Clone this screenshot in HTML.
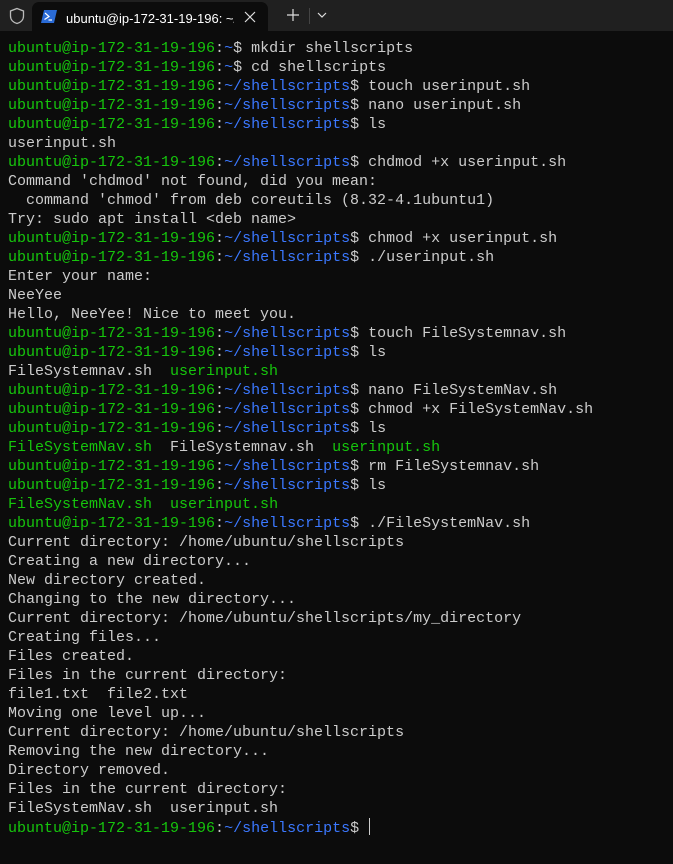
<!DOCTYPE html>
<html><head><meta charset="utf-8"><style>
html,body{margin:0;padding:0;width:673px;height:864px;background:#0c0c0c;overflow:hidden}
.bar{position:absolute;left:0;top:0;width:673px;height:31px;background:#202020}
.tab{position:absolute;left:32px;top:2px;width:236px;height:29px;background:#0c0c0c;border-radius:7px 7px 0 0}
.tt{position:absolute;left:66px;top:9px;font:13px "Liberation Sans",sans-serif;color:#fff;white-space:nowrap;width:168px;overflow:hidden}
pre{position:absolute;left:8px;top:38.6px;margin:0;font:15px/19.02px "Liberation Mono",monospace;color:#cccccc}
.g{color:#16c60c}.b{color:#3b78ff}
.cur{display:inline-block;width:1px;height:17px;background:#ccc;vertical-align:-3px;margin-left:1px}
</style></head><body>
<div class="bar">
<svg style="position:absolute;left:9px;top:7px" width="16" height="18" viewBox="0 0 16 18"><path d="M8 1.5 L14.5 4 V9 C14.5 13 11.5 15.5 8 16.5 C4.5 15.5 1.5 13 1.5 9 V4 Z" fill="none" stroke="#bbb" stroke-width="1.3"/></svg>
<div class="tab">
<svg style="position:absolute;left:9px;top:8px" width="16" height="13" viewBox="0 0 16 13"><path d="M3 0H16L13 13H0Z" fill="#2a6bd6"/><path d="M4 3L8 6.5L3.5 9.5" stroke="#fff" stroke-width="1.2" fill="none"/><path d="M7.5 10H11" stroke="#fff" stroke-width="1.2"/></svg>
<div class="tt" style="left:34px">ubuntu@ip-172-31-19-196: ~/s</div>
<svg style="position:absolute;left:212px;top:9px" width="12" height="12" viewBox="0 0 12 12"><path d="M1 1L11 11M11 1L1 11" stroke="#ddd" stroke-width="1.2"/></svg>
</div>
<svg style="position:absolute;left:287px;top:9px" width="12" height="12" viewBox="0 0 12 12"><path d="M6 0V12M0 6H12" stroke="#ddd" stroke-width="1.2"/></svg>
<div style="position:absolute;left:309px;top:8px;width:1px;height:16px;background:#444"></div>
<svg style="position:absolute;left:317px;top:12px" width="10" height="6" viewBox="0 0 10 6"><path d="M1 1L5 5L9 1" stroke="#ddd" stroke-width="1.2" fill="none"/></svg>
</div>
<pre><span class="g">ubuntu@ip-172-31-19-196</span>:<span class="b">~</span>$ mkdir shellscripts
<span class="g">ubuntu@ip-172-31-19-196</span>:<span class="b">~</span>$ cd shellscripts
<span class="g">ubuntu@ip-172-31-19-196</span>:<span class="b">~/shellscripts</span>$ touch userinput.sh
<span class="g">ubuntu@ip-172-31-19-196</span>:<span class="b">~/shellscripts</span>$ nano userinput.sh
<span class="g">ubuntu@ip-172-31-19-196</span>:<span class="b">~/shellscripts</span>$ ls
userinput.sh
<span class="g">ubuntu@ip-172-31-19-196</span>:<span class="b">~/shellscripts</span>$ chdmod +x userinput.sh
Command 'chdmod' not found, did you mean:
  command 'chmod' from deb coreutils (8.32-4.1ubuntu1)
Try: sudo apt install &lt;deb name&gt;
<span class="g">ubuntu@ip-172-31-19-196</span>:<span class="b">~/shellscripts</span>$ chmod +x userinput.sh
<span class="g">ubuntu@ip-172-31-19-196</span>:<span class="b">~/shellscripts</span>$ ./userinput.sh
Enter your name:
NeeYee
Hello, NeeYee! Nice to meet you.
<span class="g">ubuntu@ip-172-31-19-196</span>:<span class="b">~/shellscripts</span>$ touch FileSystemnav.sh
<span class="g">ubuntu@ip-172-31-19-196</span>:<span class="b">~/shellscripts</span>$ ls
FileSystemnav.sh  <span class="g">userinput.sh</span>
<span class="g">ubuntu@ip-172-31-19-196</span>:<span class="b">~/shellscripts</span>$ nano FileSystemNav.sh
<span class="g">ubuntu@ip-172-31-19-196</span>:<span class="b">~/shellscripts</span>$ chmod +x FileSystemNav.sh
<span class="g">ubuntu@ip-172-31-19-196</span>:<span class="b">~/shellscripts</span>$ ls
<span class="g">FileSystemNav.sh</span>  FileSystemnav.sh  <span class="g">userinput.sh</span>
<span class="g">ubuntu@ip-172-31-19-196</span>:<span class="b">~/shellscripts</span>$ rm FileSystemnav.sh
<span class="g">ubuntu@ip-172-31-19-196</span>:<span class="b">~/shellscripts</span>$ ls
<span class="g">FileSystemNav.sh</span>  <span class="g">userinput.sh</span>
<span class="g">ubuntu@ip-172-31-19-196</span>:<span class="b">~/shellscripts</span>$ ./FileSystemNav.sh
Current directory: /home/ubuntu/shellscripts
Creating a new directory...
New directory created.
Changing to the new directory...
Current directory: /home/ubuntu/shellscripts/my_directory
Creating files...
Files created.
Files in the current directory:
file1.txt  file2.txt
Moving one level up...
Current directory: /home/ubuntu/shellscripts
Removing the new directory...
Directory removed.
Files in the current directory:
FileSystemNav.sh  userinput.sh
<span class="g">ubuntu@ip-172-31-19-196</span>:<span class="b">~/shellscripts</span>$ <span class="cur"></span></pre>
</body></html>
